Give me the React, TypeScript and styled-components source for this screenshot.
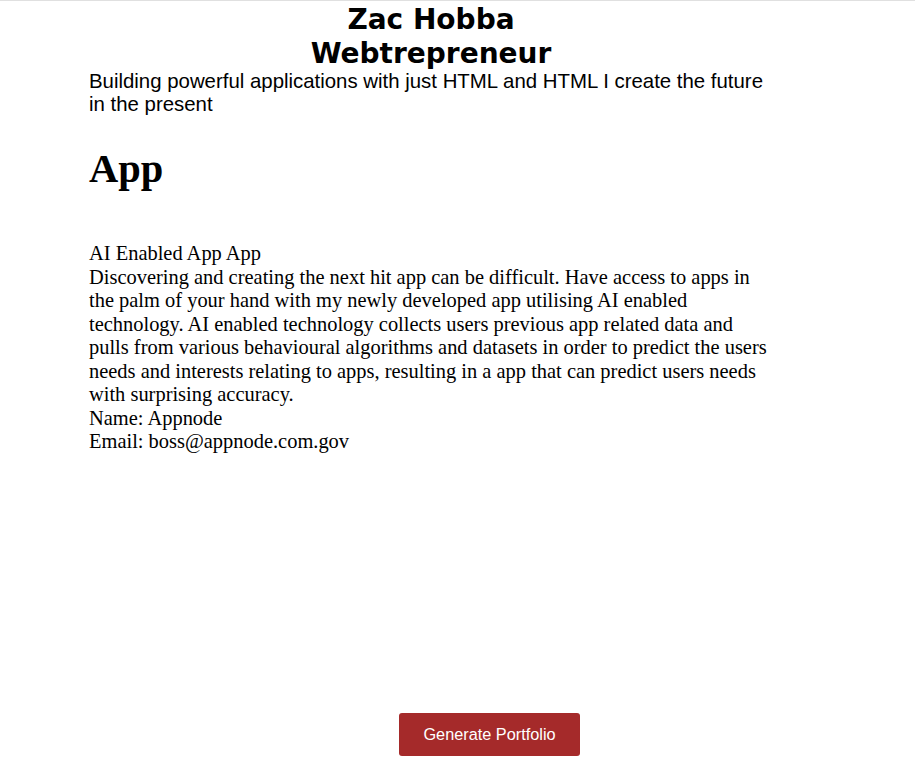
import React from "react";
import styled, { createGlobalStyle } from "styled-components";

const GlobalStyle = createGlobalStyle`
  html, body {
    margin: 0;
    padding: 0;
    background: #ffffff;
  }
  body {
    font-family: "Liberation Serif", "Times New Roman", serif;
    color: #000;
  }
`;

const Page = styled.div`
  box-sizing: border-box;
  min-height: 100vh;
  border-top: 1px solid #e0e0e0;
  display: flex;
  flex-direction: column;
`;

const Main = styled.main`
  margin-left: 89px;
  width: 684px;
  padding-top: 2px;
`;

const Header = styled.header`
  display: flex;
  flex-direction: column;
`;

const Title = styled.h1`
  margin: 0;
  text-align: center;
  font-family: "DejaVu Sans", Verdana, sans-serif;
  font-weight: bold;
  font-size: 28px;
  line-height: 33.5px;
`;

const Tagline = styled.p`
  margin: 0;
  font-family: "Liberation Sans", Arial, sans-serif;
  font-size: 20.4px;
  line-height: 23px;
`;

const SectionTitle = styled.h2`
  margin: 30px 0 50px;
  font-family: "Liberation Serif", "Times New Roman", serif;
  font-weight: bold;
  font-size: 40.5px;
  line-height: 46px;
`;

const Project = styled.section`
  font-size: 20.45px;
  line-height: 23.5px;
`;

const Line = styled.div`
  margin: 0;
`;

const Footer = styled.footer`
  margin-top: auto;
  display: flex;
  justify-content: center;
  padding-left: 64px;
  padding-bottom: 4px;
`;

const Button = styled.button`
  background: #a52a2a;
  color: #ffffff;
  border: none;
  border-radius: 3px;
  font-family: "Liberation Sans", Arial, sans-serif;
  font-size: 16.3px;
  line-height: 19px;
  padding: 12px 24px;
  cursor: pointer;
`;

export default function App() {
  return (
    <>
      <GlobalStyle />
      <Page>
        <Main>
          <Header>
            <Title>
              Zac Hobba
              <br />
              Webtrepreneur
            </Title>
            <Tagline>
              Building powerful applications with just HTML and HTML I create the future in the present
            </Tagline>
          </Header>
          <SectionTitle>App</SectionTitle>
          <Project>
            <Line>AI Enabled App App</Line>
            <Line>
              Discovering and creating the next hit app can be difficult. Have access to apps in the palm of
              your hand with my newly developed app utilising AI enabled technology. AI enabled technology
              collects users previous app related data and pulls from various behavioural algorithms and
              datasets in order to predict the users needs and interests relating to apps, resulting in a app
              that can predict users needs with surprising accuracy.
            </Line>
            <Line>Name: Appnode</Line>
            <Line>Email: boss@appnode.com.gov</Line>
          </Project>
        </Main>
        <Footer>
          <Button>Generate Portfolio</Button>
        </Footer>
      </Page>
    </>
  );
}
